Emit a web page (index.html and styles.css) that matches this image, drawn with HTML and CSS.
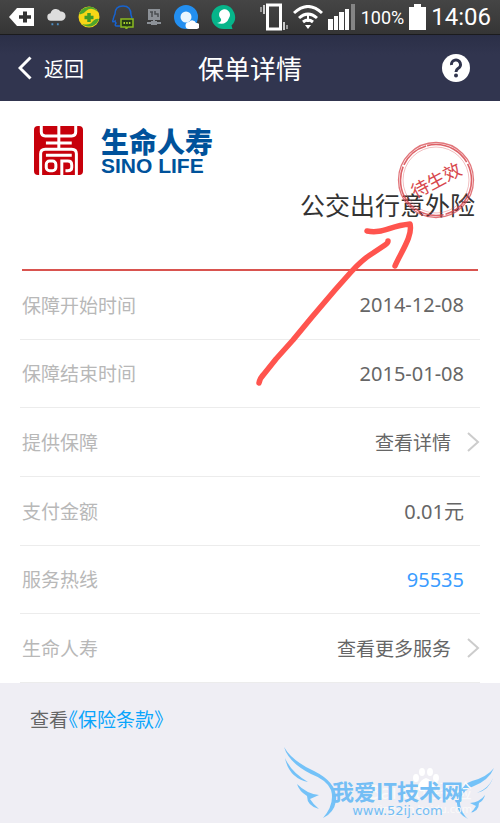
FILE: index.html
```html
<!DOCTYPE html>
<html lang="zh-CN">
<head>
<meta charset="utf-8">
<meta name="viewport" content="width=device-width, initial-scale=1">
<title>保单详情</title>
<link rel="stylesheet" href="styles.css">
</head>
<body>
<div class="screen">
  <div class="status">
    <div class="status-icons">
      <svg width="26" height="20" viewBox="0 0 26 22" preserveAspectRatio="none"><path d="M1 11 9 1h17v20H9z" fill="#fff"/><path d="M17 5v12M11 11h12" stroke="#333" stroke-width="4"/></svg>
      <svg width="20" height="20" viewBox="0 0 20 22"><path d="M5 15a4 4 0 0 1-1-8 6 6 0 0 1 11-2 5 5 0 0 1 1 10z" fill="#ddd"/><path d="M6 18v2M12 18v2" stroke="#4d8ec4" stroke-width="2"/></svg>
      <svg width="22" height="22" viewBox="0 0 22 22"><circle cx="11" cy="11" r="10.500" fill="#f7d616"/><path d="M1 8A10.500 10.500 0 0 1 20 6Q13 0 8 5 5 9 1 8M21 13A10.500 10.500 0 0 1 4 18q8 2 11-3 3-3 6-2" fill="#4fa52c"/><path d="M11 7v9M6.500 11.500h9" stroke="#3f9a28" stroke-width="3.500"/></svg>
      <svg width="22" height="24" viewBox="0 0 22 24" fill="none"><path d="M8 21H5q-3 0-1-3-1-1-1-2-3 2-2-1 1-4 2-6Q3 1 11 1t8 9l1 3" stroke="#1763cf" stroke-width="1.500"/><path d="M9 14h12v8h-5l-2 2v-2H9z" fill="#263b16" stroke="#8aba20" stroke-width="1.500"/><path d="M11.500 18h7" stroke="#a9d52f" stroke-width="2" stroke-dasharray="1.500 1.200"/></svg>
      <svg width="16" height="20" viewBox="0 0 16 20"><path d="M2 2h12v11H2zM7 13h2v4H7zM1 15h14v2H1zM5 14h6v4H5z" fill="#8c9197"/><path d="M4 5h3M6 5v5M9 4v3h3v3" stroke="#4a4e52" stroke-width="1.500" fill="none"/></svg>
      <svg width="25" height="25" viewBox="0 0 25 25"><circle cx="12" cy="12" r="8.500" fill="none" stroke="#238ff0" stroke-width="7"/><circle cx="12" cy="12" r="5.500" fill="#e9f6ff"/><path d="M15 24a3.500 3.500 0 0 1 0-7 4 4 0 0 1 7 1 3 3 0 0 1 1 6z" fill="#fff"/></svg>
      <svg width="25" height="25" viewBox="0 0 25 25"><path d="M12.500 0a12 12 0 0 1 8 20.500l1 3.500h-9a12 12 0 0 1 0-24" fill="#06b58a"/><path d="M6 18q5-1 4-4a5.500 5.500 0 1 1 8-1q-3 8-12 5" fill="#fff"/></svg>
    </div>
    <div class="status-right">
      <svg width="28" height="28" viewBox="0 0 28 28" fill="none" stroke="#fff"><rect x="7.500" y="2" width="13" height="24" stroke-width="3"/><path d="M4 2v9M24 19v8" stroke="#ccc" stroke-width="2"/><path d="M1 4v5M27 22v4" stroke="#999" stroke-width="2"/></svg>
      <svg width="30" height="24" viewBox="0 0 30 24" fill="none" stroke="#fff"><path d="M1 8q14-13 28 0M6 13q9-8 18 0" stroke-width="3"/><path d="M10 17q5-4 10 0" stroke-width="3"/><path d="M15 9v8" stroke-width="2"/><path d="m12 20 3 4 3-4z" fill="#fff" stroke="none"/></svg>
      <svg width="28" height="26" viewBox="0 0 28 26" fill="#fff"><path d="M0 15h5v11H0zM6 12h4v14H6zM11 8h5v18h-5zM17 5h4v21h-4z"/><path d="M23 0h4v26h-4z" fill="#858585"/></svg>
      <span class="percent">100%</span>
      <svg width="17" height="26" viewBox="0 0 17 26"><path d="M5 0h7v3h5v23H0V3h5z" fill="#fff"/></svg>
      <time class="clock">14:06</time>
    </div>
  </div>

  <header class="bar">
    <button class="back" type="button">
      <svg width="14" height="24" viewBox="0 0 14 24"><path d="M12.500 1.500 2 12l10.500 10.500" fill="none" stroke="#fff" stroke-width="3"/></svg>
      返回
    </button>
    <h1 class="title">保单详情</h1>
    <button class="help" type="button" aria-label="帮助">
      <svg width="28" height="28" viewBox="0 0 28 28"><circle cx="14" cy="14" r="14" fill="#fff"/><path d="M9.500 11a4.500 4.500 0 1 1 6.500 3.500q-2 1.300-2 3.500" fill="none" stroke="#30344d" stroke-width="3"/><circle cx="14" cy="21.500" r="2" fill="#30344d"/></svg>
    </button>
  </header>

  <main class="card">
    <section class="hero">
      <div class="brand">
        <svg width="49" height="49" viewBox="0 0 148 148"><rect width="148" height="148" rx="12" fill="#c7000b"/><g fill="none" stroke="#fff" stroke-width="9"><path d="M22 0v18q0 12 12 12h80q12 0 12-12V0M75 0v70M36 51h78M20 148V84q0-14 14-14h80q14 0 14 14v64M36 88h78"/><rect x="37" y="106" width="29" height="29" rx="10"/><path d="M84 148v-42h18q12 0 12 12v7q0 10-12 10h-7"/></g></svg>
        <div class="brand-text">
          <span class="brand-cn">生命人寿</span>
          <span class="brand-en">SINO LIFE</span>
        </div>
      </div>
      <div class="product">
        <h2 class="product-name">公交出行意外险</h2>
        <div class="stamp">
          <svg class="stamp-ring" width="78" height="78" viewBox="0 0 78 78" fill="none" stroke="#d7474d"><circle cx="39" cy="39" r="37.500" stroke-width="1.300" opacity=".75"/><circle cx="39" cy="39" r="35.500" stroke-width="1.600" stroke-dasharray="46 2 30 1" opacity=".85"/><circle cx="39" cy="39" r="33" opacity=".35"/></svg>
          <span class="stamp-text">待生效</span>
        </div>
      </div>
    </section>

    <dl class="rows">
      <div class="row"><dt>保障开始时间</dt><dd>2014-12-08</dd></div>
      <div class="row"><dt>保障结束时间</dt><dd>2015-01-08</dd></div>
      <div class="row"><dt>提供保障</dt><dd class="more"><a href="#detail">查看详情<svg width="13" height="20" viewBox="0 0 13 20"><path d="m1 1 10 9-10 9" fill="none" stroke="#ccc" stroke-width="2"/></svg></a></dd></div>
      <div class="row"><dt>支付金额</dt><dd>0.01元</dd></div>
      <div class="row"><dt>服务热线</dt><dd><a class="phone" href="tel:95535">95535</a></dd></div>
      <div class="row"><dt>生命人寿</dt><dd class="more"><a href="#services">查看更多服务<svg width="13" height="20" viewBox="0 0 13 20"><path d="m1 1 10 9-10 9" fill="none" stroke="#ccc" stroke-width="2"/></svg></a></dd></div>
    </dl>

    <svg class="arrow" width="160" height="168" viewBox="0 0 160 168" fill="none" stroke="#ff544e" stroke-linecap="round" stroke-linejoin="round" stroke-width="5.500"><path d="M4 164q1-5 5-9l12-15 17-19 19-23 23-27 16-18q12-13 22-19l12-8q3-2 3-4M112 12c16 3 22-5 43-7 3 12-9 28-15 42"/></svg>
  </main>

  <footer class="terms">查看<a href="#terms">《保险条款》</a></footer>

  <div class="watermark">
    <div class="under">
      <span class="under-main">Bai du 经验</span>
      <span class="under-sub">jingyan.baidu.com</span>
      <svg class="paw" width="28" height="26" viewBox="0 0 28 26" fill="#fff"><ellipse cx="4" cy="11" rx="3" ry="4"/><ellipse cx="10" cy="5" rx="3" ry="4"/><ellipse cx="18" cy="5" rx="3" ry="4"/><ellipse cx="24" cy="11" rx="3" ry="4"/><path d="M14 11q5 1 8 8 1 6-5 5-3-1-6 0-6 1-5-5 3-7 8-8"/></svg>
    </div>
    <svg class="wing" width="54" height="72" viewBox="0 0 54 72" fill="#74c2f8"><path d="M0 0Q8 14 30 24q24 12 22 30Q50 66 39 71q12-14 8-28Q43 33 27 27 5 16 0 0M1 11q6 14 23 24Q5 31 1 11M13 37q10 10 22 11l-9 4q3 5 9 10-12-3-12-13-8-5-10-12"/></svg>
    <div class="site">
      <span class="site-name">我爱IT技术网</span>
      <span class="site-url">www.52ij.com</span>
    </div>
    <svg class="wing-right" width="37" height="51" viewBox="0 0 37 51" fill="#74c2f8"><path d="M37 0Q32 12 17 18-1 26 4 40q2 7 7 11Q-1 46 0 32 0 18 15 13 30 9 37 0M36 10q-4 12-16 15Q32 20 36 10M28 27q-5 7-15 8l6 3q-2 4-6 7 9-2 9-10 5-3 6-8"/></svg>
  </div>
</div>
</body>
</html>
```
FILE: styles.css
```css
* { box-sizing: border-box; }

body {
  margin: 0;
  background: #efeef4;
  color: #666;
  font-family: "Noto Sans", "Noto Sans CJK SC", sans-serif;
  font-size: 19px;
}

h1, h2, dl, dd { margin: 0; }
a { color: inherit; text-decoration: none; }
svg { display: block; flex: none; }

button {
  border: 0;
  padding: 0;
  background: none;
  color: inherit;
  font: inherit;
}

.screen {
  position: relative;
  min-height: 100vh;
  overflow: hidden;
}

.status {
  display: flex;
  align-items: center;
  justify-content: space-between;
  height: 35px;
  padding: 0 9px 0 8px;
  background: linear-gradient(#454545, #353535);
  border-bottom: 1px solid #1b1b1d;
  color: #fff;
  font-family: Roboto, sans-serif;
}

.status-icons { display: flex; align-items: center; gap: 12px; }
.status-right { display: flex; align-items: center; gap: 5px; }
.percent { font-size: 18px; }
.clock { font-size: 24px; }

.bar {
  display: grid;
  grid-template-columns: 1fr auto 1fr;
  align-items: center;
  height: 66px;
  padding: 0 30px 0 18px;
  background: linear-gradient(#2b2f47, #31354f 30%);
  color: #fff;
  font-family: "Noto Sans CJK SC", sans-serif;
}

.back {
  display: flex;
  align-items: center;
  justify-self: start;
  gap: 12px;
  font-size: 20px;
}

.title {
  padding-left: 12px;
  font-size: 26px;
  font-weight: 400;
  line-height: 36px;
}

.help { justify-self: end; }

.card { position: relative; background: #fff; }

.hero {
  margin: 0 22px;
  padding: 25px 0 47px 12px;
  border-bottom: 2px solid #d9544f;
}

.brand { display: flex; gap: 18px; }

.brand-text {
  display: flex;
  flex-direction: column;
  color: #00529b;
}

.brand-cn {
  font: 900 28px/30px "Noto Sans CJK SC", sans-serif;
}

.brand-en {
  font: 700 21px/19px "Liberation Sans", sans-serif;
}

.product {
  position: relative;
  display: flex;
  justify-content: flex-end;
  margin-top: 11px;
  padding-right: 3px;
}

.product-name {
  color: #333;
  font: 400 25px/36px "Noto Sans CJK SC", sans-serif;
}

.stamp {
  position: absolute;
  right: 3px;
  bottom: 3px;
  display: grid;
  place-items: center;
}

.stamp > * { grid-area: 1 / 1; }

.stamp-text {
  color: #d7474d;
  font-size: 18px;
  line-height: 20px;
  transform: rotate(-28deg);
}

.rows {
  display: grid;
  grid-auto-rows: 1fr;
  min-height: 412px;
  padding: 0 20px;
}

.row {
  display: flex;
  align-items: center;
  justify-content: space-between;
  padding-left: 2px;
  border-bottom: 1px solid #ececec;
}

dt { color: #b8b8b8; }
dd { padding-right: 16px; font-size: 20px; }
.more { padding-right: 0; font-size: 19px; }
.more a { display: flex; align-items: center; gap: 16px; }
.phone { color: #3a9cff; }

.arrow {
  position: absolute;
  left: 255px;
  top: 118px;
}

.terms {
  padding: 23px 30px;
  line-height: 28px;
}

.terms a { color: #0aa5fc; margin-left: -9px; }

.watermark {
  position: absolute;
  right: 6px;
  bottom: 4px;
  display: flex;
  align-items: flex-end;
}

.site {
  position: relative;
  display: flex;
  flex-direction: column;
  align-items: center;
  margin: 0 -6px;
  color: #74bef5;
}

.site-name { font: 700 22px/25px "Noto Sans CJK SC", sans-serif; }
.site-url { font: 400 13px/16px "DejaVu Sans", sans-serif; }

.under {
  position: absolute;
  right: 22px;
  bottom: 4px;
  display: flex;
  flex-direction: column;
  align-items: flex-end;
  color: #fafafa;
}

.under-main { font-size: 20px; line-height: 22px; }
.under-sub { font-size: 11px; line-height: 12px; }
.paw { position: absolute; right: 32px; bottom: 22px; }
```
